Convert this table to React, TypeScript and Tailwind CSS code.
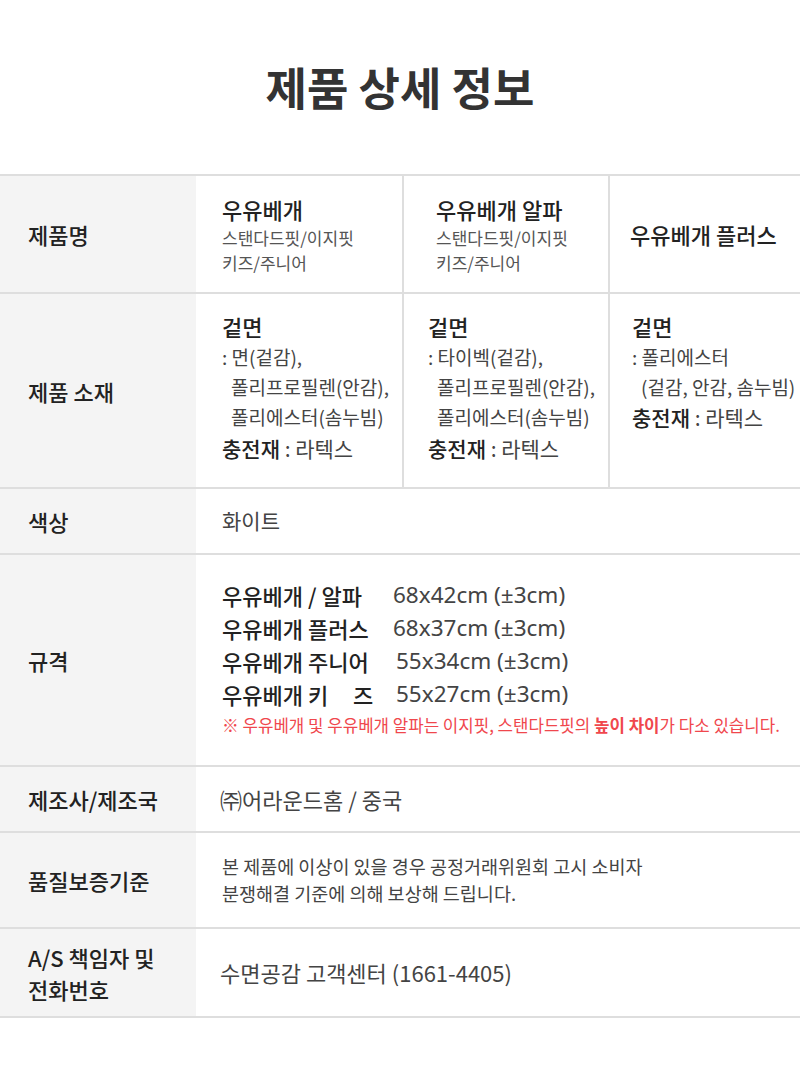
import React from 'react';

const specs = [
  { name: '우유베개 / 알파', size: '68x42cm (±3cm)', w: 'w-[171px]' },
  { name: '우유베개 플러스', size: '68x37cm (±3cm)', w: 'w-[171px]' },
  { name: '우유베개 주니어', size: '55x34cm (±3cm)', w: 'w-[174px]' },
  { name: '우유베개 키\u00a0\u00a0\u00a0\u00a0\u00a0즈', size: '55x27cm (±3cm)', w: 'w-[174px]' },
];

function Label({ children }: { children: React.ReactNode }) {
  return (
    <div className="w-[196px] shrink-0 bg-[#f4f4f4] flex items-center pl-[28px] text-[22px] font-medium text-[#222] leading-[32px]">
      {children}
    </div>
  );
}

export default function App() {
  return (
    <div className="w-[800px] min-h-[1082px] bg-white font-['Noto_Sans_CJK_KR','Noto_Sans',sans-serif] text-[#333]">
      {/* Title */}
      <div className="h-[174px] flex items-center justify-center">
        <h1 className="text-[45px] font-bold text-[#333] mb-[1px]">제품 상세 정보</h1>
      </div>

      <div className="border-t-2 border-[#dedede]">
        {/* 제품명 */}
        <div className="flex h-[118px] border-b-2 border-[#dedede]">
          <Label>제품명</Label>
          <div className="w-[208px] border-r-2 border-[#dedede] flex flex-col justify-center pl-[26px]">
            <p className="text-[22px] font-medium text-[#222] leading-[32px]">우유베개</p>
            <p className="text-[17px] text-[#555] leading-[25px]">스탠다드핏/이지핏</p>
            <p className="text-[17px] text-[#555] leading-[25px]">키즈/주니어</p>
          </div>
          <div className="w-[206px] border-r-2 border-[#dedede] flex flex-col justify-center pl-[32px]">
            <p className="text-[22px] font-medium text-[#222] leading-[32px]">우유베개 알파</p>
            <p className="text-[17px] text-[#555] leading-[25px]">스탠다드핏/이지핏</p>
            <p className="text-[17px] text-[#555] leading-[25px]">키즈/주니어</p>
          </div>
          <div className="flex-1 flex items-center pl-[20px]">
            <p className="text-[22px] font-medium text-[#222] leading-[32px] whitespace-nowrap">우유베개 플러스</p>
          </div>
        </div>

        {/* 제품 소재 */}
        <div className="flex h-[195px] border-b-2 border-[#dedede]">
          <Label>제품 소재</Label>
          <div className="w-[208px] border-r-2 border-[#dedede] pl-[26px] pt-[16px] text-[19px] text-[#444] leading-[30px] whitespace-nowrap">
            <p className="text-[22px] font-medium text-[#222] leading-[32px]">겉면</p>
            <p>: 면(겉감),</p>
            <p className="pl-[9px]">폴리프로필렌(안감),</p>
            <p className="pl-[9px]">폴리에스터(솜누빔)</p>
            <p className="text-[21px] leading-[32px]"><span className="font-medium text-[#222]">충전재</span> : 라텍스</p>
          </div>
          <div className="w-[206px] border-r-2 border-[#dedede] pl-[24px] pt-[16px] text-[19px] text-[#444] leading-[30px] whitespace-nowrap">
            <p className="text-[22px] font-medium text-[#222] leading-[32px]">겉면</p>
            <p>: 타이벡(겉감),</p>
            <p className="pl-[9px]">폴리프로필렌(안감),</p>
            <p className="pl-[9px]">폴리에스터(솜누빔)</p>
            <p className="text-[21px] leading-[32px]"><span className="font-medium text-[#222]">충전재</span> : 라텍스</p>
          </div>
          <div className="flex-1 pl-[22px] pt-[16px] text-[19px] text-[#444] leading-[30px] whitespace-nowrap">
            <p className="text-[22px] font-medium text-[#222] leading-[32px]">겉면</p>
            <p>: 폴리에스터</p>
            <p className="pl-[9px]">(겉감, 안감, 솜누빔)</p>
            <p className="text-[21px] leading-[31px]"><span className="font-medium text-[#222]">충전재</span> : 라텍스</p>
          </div>
        </div>

        {/* 색상 */}
        <div className="flex h-[66px] border-b-2 border-[#dedede]">
          <Label>색상</Label>
          <div className="flex-1 flex items-center pl-[26px] text-[21px] text-[#444]">화이트</div>
        </div>

        {/* 규격 */}
        <div className="flex h-[212px] border-b-2 border-[#dedede]">
          <Label>규격</Label>
          <div className="flex-1 flex flex-col justify-center pl-[26px] pb-[4px]">
            {specs.map((s) => (
              <div key={s.size} className="flex items-center h-[33px]">
                <span className={`${s.w} font-medium text-[#222] text-[22px] leading-[32px] whitespace-pre`}>{s.name}</span>
                <span className="text-[#444] text-[22.5px] leading-[32px] font-['Noto_Sans',sans-serif]">{s.size}</span>
              </div>
            ))}
            <p className="text-[16.8px] text-[#f0474d] mt-[2px] leading-[26px] whitespace-nowrap">
              ※ 우유베개 및 우유베개 알파는 이지핏, 스탠다드핏의 <b className="font-bold">높이 차이</b>가 다소 있습니다.
            </p>
          </div>
        </div>

        {/* 제조사/제조국 */}
        <div className="flex h-[66px] border-b-2 border-[#dedede]">
          <Label>제조사/제조국</Label>
          <div className="flex-1 flex items-center pl-[24px] text-[22px] text-[#444]">㈜어라운드홈 / 중국</div>
        </div>

        {/* 품질보증기준 */}
        <div className="flex h-[96px] border-b-2 border-[#dedede]">
          <Label>품질보증기준</Label>
          <div className="flex-1 flex flex-col justify-center pl-[26px] text-[18.5px] text-[#444] leading-[27px]">
            <p>본 제품에 이상이 있을 경우 공정거래위원회 고시 소비자</p>
            <p>분쟁해결 기준에 의해 보상해 드립니다.</p>
          </div>
        </div>

        {/* A/S */}
        <div className="flex h-[89px] border-b-2 border-[#dedede]">
          <Label>
            <span>
              A/S 책임자 및<br />전화번호
            </span>
          </Label>
          <div className="flex-1 flex items-center pl-[24px] text-[22px] text-[#444]">수면공감 고객센터 (1661-4405)</div>
        </div>
      </div>
    </div>
  );
}
